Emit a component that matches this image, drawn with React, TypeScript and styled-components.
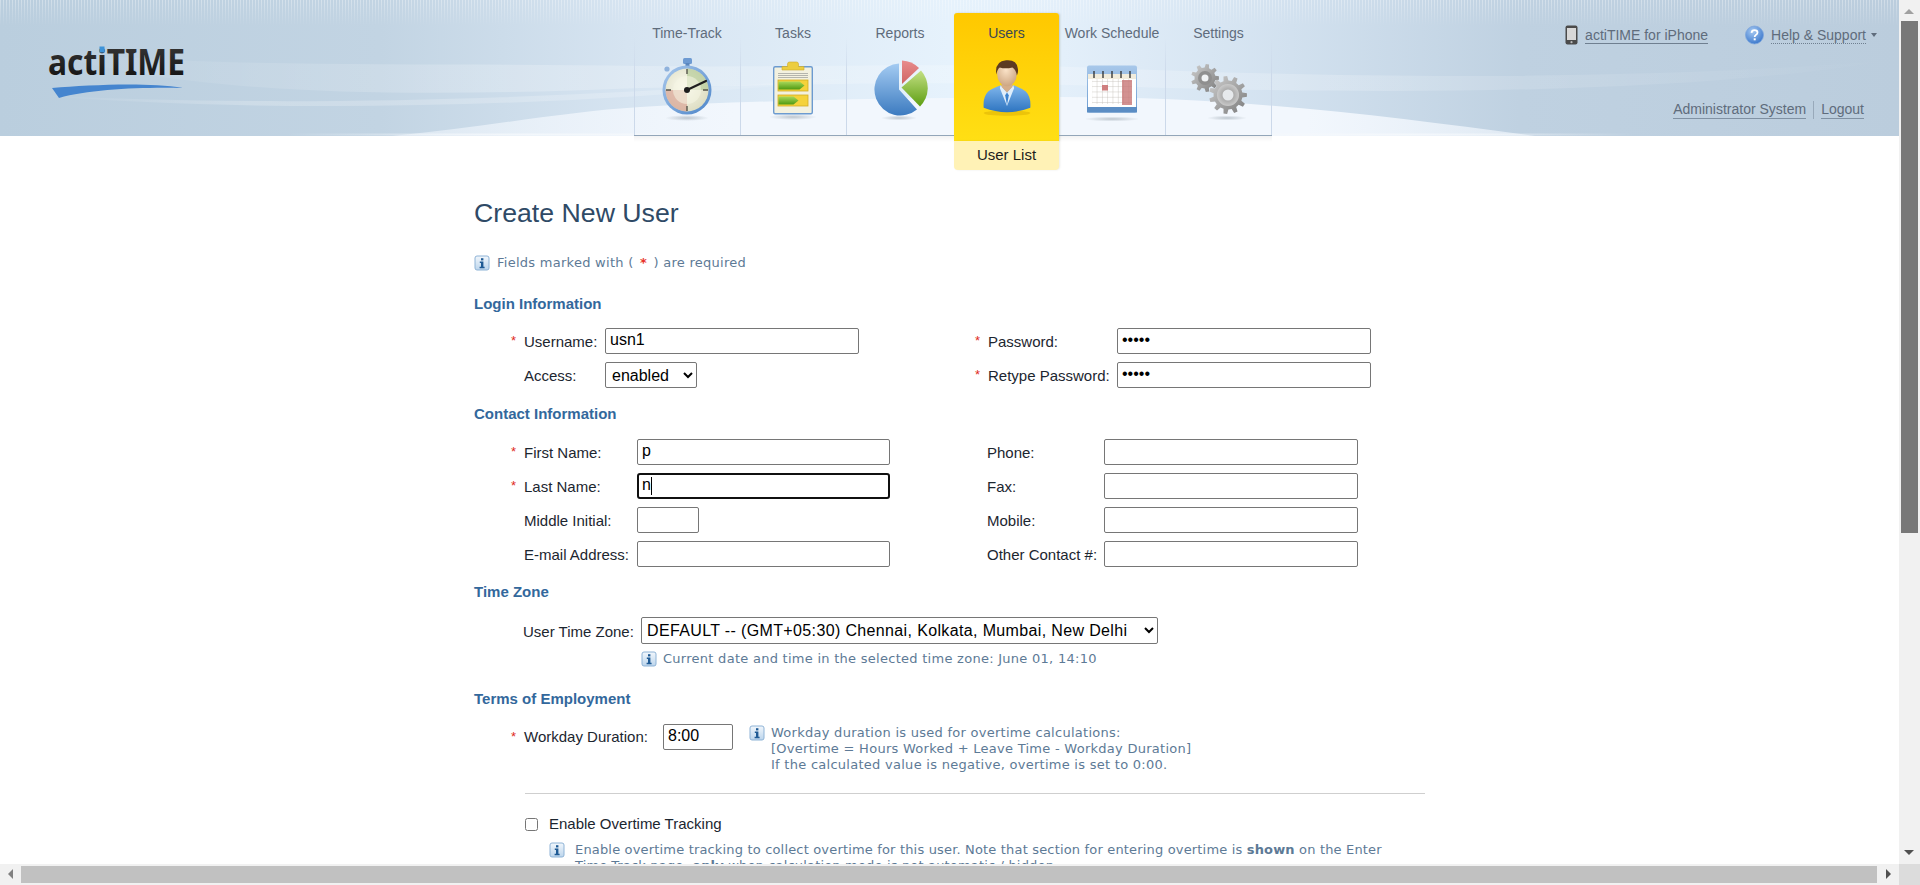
import React from "react";
import styled, { createGlobalStyle } from "styled-components";

const Global = createGlobalStyle`
  html, body { margin: 0; padding: 0; height: 100%; overflow: hidden; background: #fff; }
  body { font-family: "Liberation Sans", Arial, sans-serif; font-size: 15px; color: #1c2630; }
  * { box-sizing: border-box; }
`;

const Frame = styled.div`
  display: grid;
  grid-template-columns: 1fr 21px;
  grid-template-rows: 1fr 21px;
  width: 100vw;
  height: 100vh;
  overflow: hidden;
`;
const Page = styled.div`
  min-width: 0;
  min-height: 0;
  overflow: hidden;
  display: flex;
  flex-direction: column;
`;
const Header = styled.header`
  position: relative;
  flex: 0 0 136px;
  height: 136px;
  display: flex;
  background: linear-gradient(90deg, #bacede 0%, #c2d4e3 20%, #d6e4f1 33%, #e6f2fc 50%, #e3effa 56%, #d2e1ef 68%, #bfd1e1 80%, #bbcddd 100%);
`;
const HeaderArt = styled.svg`
  position: absolute;
  inset: 0;
  width: 100%;
  height: 100%;
  pointer-events: none;
`;
const Stripes = styled.div`
  position: absolute;
  left: 0;
  right: 0;
  top: 0;
  height: 26px;
  background: repeating-linear-gradient(90deg, rgba(255,255,255,.34) 0 1px, rgba(255,255,255,0) 1px 3px);
  -webkit-mask-image: linear-gradient(180deg, #000, transparent);
  mask-image: linear-gradient(180deg, #000, transparent);
`;
const LogoBox = styled.div`
  position: relative;
  flex: 0 0 634px;
  padding: 41px 0 0 46px;
`;
const Nav = styled.nav`
  position: relative;
  display: flex;
  align-items: flex-start;
  height: 136px;
  padding-top: 13px;
  &::after {
    content: "";
    position: absolute;
    left: 0;
    right: 0;
    top: 136px;
    height: 6px;
    background: linear-gradient(180deg, #f3f3f3, #fff);
  }
`;
const Tab = styled.div<{ $w: number; $active?: boolean; $last?: boolean }>`
  position: relative;
  z-index: 1;
  width: ${(p) => p.$w}px;
  height: ${(p) => (p.$active ? 128 : 123)}px;
  display: flex;
  flex-direction: column;
  align-items: center;
  padding-top: 12px;
  font-size: 14px;
  line-height: 16px;
  color: ${(p) => (p.$active ? "#3a4756" : "#5f6c7c")};
  border-bottom: ${(p) => (p.$active ? "0" : "1px solid #93a6b9")};
  border-radius: ${(p) => (p.$active ? "3px 3px 0 0" : "0")};
  background: ${(p) =>
    p.$active
      ? "linear-gradient(180deg, #ffc800, #ffdf14)"
      : `linear-gradient(180deg, rgba(204,217,234,0) 20%, #ccd9ea 50%) left top / 1px 100% no-repeat${
          p.$last ? ", linear-gradient(180deg, rgba(204,217,234,0) 20%, #ccd9ea 50%) right top / 1px 100% no-repeat" : ""
        }`};
  box-shadow: ${(p) => (p.$active ? "1px 0 2px rgba(90,90,60,.25)" : "none")};
`;
const TabIcon = styled.div`
  height: 72px;
  margin-top: 13px;
  display: flex;
  align-items: flex-start;
  justify-content: center;
`;
const SubMenu = styled.div`
  position: absolute;
  left: 0;
  right: 0;
  top: 128px;
  height: 29px;
  background: #fff2b6;
  border-radius: 0 0 4px 4px;
  color: #1d1d1d;
  font-size: 15px;
  text-align: center;
  line-height: 28px;
  box-shadow: 1px 0 2px rgba(90,90,60,.12);
`;
const RightBox = styled.div`
  position: relative;
  margin-left: auto;
  padding: 25px 22px 0 0;
  display: flex;
  flex-direction: column;
  align-items: flex-end;
  font-size: 14px;
  color: #5f6c7c;
`;
const TopLinks = styled.div`
  display: flex;
  align-items: center;
  height: 20px;
`;
const TopLink = styled.div<{ $gap?: number }>`
  display: flex;
  align-items: center;
  margin-left: ${(p) => p.$gap ?? 0}px;
`;
const Underlined = styled.span<{ $dotted?: boolean }>`
  line-height: 16px;
  margin-left: 7px;
  border-bottom: 1px ${(p) => (p.$dotted ? "dotted" : "solid")} #6f7f90;
`;
const Caret = styled.span`
  width: 0;
  height: 0;
  border: 3px solid transparent;
  border-top: 4px solid #5f6c7c;
  border-bottom: 0;
  margin-left: 5px;
`;
const UserLinks = styled.div`
  display: flex;
  align-items: flex-start;
  margin: 56px 13px 0 0;
`;
const UserLink = styled.span`
  line-height: 17px;
  border-bottom: 1px solid #8091a3;
`;
const UserDivider = styled.span`
  width: 1px;
  height: 18px;
  background: #98a9ba;
  margin: 0 7px;
`;
const Content = styled.main`
  padding: 61px 0 0 474px;
  flex: 1;
  min-height: 0;
`;
const Title = styled.h1`
  margin: 0;
  font-size: 26.7px;
  line-height: 32px;
  font-weight: 400;
  color: #2f4a66;
`;
const Note = styled.div<{ $top?: number; $left?: number; $tight?: boolean }>`
  display: flex;
  align-items: flex-start;
  margin-top: ${(p) => p.$top ?? 0}px;
  margin-left: ${(p) => p.$left ?? 0}px;
  font-family: "DejaVu Sans", Verdana, sans-serif;
  font-size: 13px;
  letter-spacing: ${(p) => (p.$tight ? ".17px" : ".27px")};
  line-height: 16px;
  color: #5d7a96;
  b { font-weight: 700; }
`;
const NoteText = styled.div<{ $gap?: number; $w?: number }>`
  margin-left: ${(p) => p.$gap ?? 7}px;
  ${(p) => (p.$w ? `width: ${p.$w}px;` : "")}
`;
const Stars = styled.span`
  color: #e8332a;
  font-weight: 700;
  margin: 0 2px;
`;
const Section = styled.h2<{ $top: number }>`
  margin: ${(p) => p.$top}px 0 0 0;
  font-size: 15px;
  line-height: 16px;
  font-weight: 700;
  color: #33689c;
`;
const Rows = styled.div<{ $top: number }>`
  margin-top: ${(p) => p.$top}px;
  display: flex;
  flex-direction: column;
  gap: 8px;
`;
const Row = styled.div`
  display: flex;
  height: 26px;
  padding-left: 37px;
`;
const Field = styled.div<{ $w?: number }>`
  display: flex;
  align-items: center;
  flex: 0 0 ${(p) => p.$w ?? 464}px;
  height: 26px;
`;
const Star = styled.span`
  flex: 0 0 13px;
  color: #e02a20;
  font-size: 13px;
  line-height: 14px;
  align-self: center;
`;
const Label = styled.label<{ $w: number; $flat?: boolean; $lift?: number }>`
  flex: 0 0 ${(p) => p.$w}px;
  padding-top: ${(p) => (p.$flat ? 0 : 1)}px;
  margin-bottom: ${(p) => p.$lift ?? 0}px;
  color: #1c2630;
`;
const TextInput = styled.input<{ $w?: number; $focused?: boolean }>`
  display: block;
  width: ${(p) => p.$w ?? 254}px;
  height: 26px;
  padding: ${(p) => (p.$focused ? "0 3px 2px" : "1px 4px 3px")};
  border: ${(p) => (p.$focused ? "2px solid #101010" : "1px solid #767676")};
  border-radius: ${(p) => (p.$focused ? 3 : 2)}px;
  background: #fff;
  color: #000;
  font-family: "Liberation Sans", Arial, sans-serif;
  font-size: 16px;
  outline: none;
`;
const InputSlot = styled.div`
  position: relative;
`;
const TextCaret = styled.span`
  position: absolute;
  left: 14px;
  top: 4px;
  width: 1px;
  height: 18px;
  background: #000;
`;
const Select = styled.select<{ $w: number; $tall?: boolean; $wide?: boolean }>`
  width: ${(p) => p.$w}px;
  height: ${(p) => (p.$tall ? 27 : 26)}px;
  border: 1px solid #767676;
  border-radius: 2px;
  background: #fff;
  color: #000;
  font-family: "Liberation Sans", Arial, sans-serif;
  font-size: 16px;
  letter-spacing: ${(p) => (p.$wide ? ".36px" : "0")};
  padding: 0 0 0 ${(p) => (p.$wide ? 1 : 2)}px;
`;
const ZoneRow = styled.div`
  display: flex;
  align-items: center;
  margin-top: 17px;
  padding-left: 49px;
`;
const DurationRow = styled.div`
  display: flex;
  align-items: flex-start;
  margin-top: 17px;
  padding-left: 37px;
`;
const DurationLabel = styled.div`
  display: flex;
  align-items: center;
  height: 26px;
`;
const DurationNote = styled(Note)`
  margin-left: 16px;
  padding-top: 1px;
`;
const Rule = styled.hr`
  width: 900px;
  height: 1px;
  margin: 20px 0 0 51px;
  border: 0;
  background: #cfcfcf;
`;
const CheckRow = styled.label`
  display: flex;
  align-items: center;
  margin: 22px 0 0 51px;
  line-height: 16px;
  input { margin: 0 11px 0 0; width: 13px; height: 13px; }
`;
const VBar = styled.div`
  position: relative;
  background: #f1f1f1;
  display: flex;
  flex-direction: column;
  align-items: center;
`;
const VThumb = styled.div`
  width: 17px;
  height: 512px;
  margin-top: 21px;
  background: #787878;
`;
const HBar = styled.div`
  position: relative;
  display: flex;
  align-items: center;
  background: #f1f1f1;
  height: 21px;
`;
const HThumb = styled.div`
  flex: 1;
  height: 17px;
  margin: 0 22px 0 21px;
  background: #c1c1c1;
`;
const Corner = styled.div`
  background: #dcdcdc;
`;
const Arrow = styled.span<{ $dir: "up" | "down" | "left" | "right" }>`
  position: absolute;
  width: 0;
  height: 0;
  border: 5px solid transparent;
  ${(p) =>
    p.$dir === "up"
      ? "top: 9px; left: 5px; border-top: 0; border-bottom: 5px solid #a0a0a0;"
      : p.$dir === "down"
      ? "bottom: 9px; left: 5px; border-bottom: 0; border-top: 5px solid #505050;"
      : p.$dir === "left"
      ? "left: 8px; top: 5px; border-left: 0; border-right: 5px solid #808080;"
      : "right: 8px; top: 5px; border-right: 0; border-left: 5px solid #505050;"}
`;

const Info = () => (
  <svg width="16" height="16" viewBox="0 0 16 16" style={{ flex: "0 0 16px" }}>
    <defs>
      <linearGradient id="infoFill" x1="0" y1="0" x2="0" y2="1">
        <stop offset="0" stopColor="#f2f7fc" />
        <stop offset="1" stopColor="#bcd5ec" />
      </linearGradient>
    </defs>
    <rect x="1" y="1" width="14" height="14" rx="2" fill="url(#infoFill)" stroke="#8eb3d6" />
    <rect x="7" y="3.2" width="2.4" height="2.2" fill="#1f5a94" />
    <path d="M5.8 6.6h3.6v5.2h1.2v1.4H5.6v-1.4h1.4V8H5.8z" fill="#1f5a94" />
  </svg>
);

const Stopwatch = () => (
  <svg width="54" height="66" viewBox="0 0 54 66" style={{ marginTop: 4 }}>
    <defs>
      <radialGradient id="swFace" cx=".42" cy=".42" r=".65">
        <stop offset="0" stopColor="#fbfaf0" />
        <stop offset="1" stopColor="#dcdcc0" />
      </radialGradient>
      <linearGradient id="swRim" x1="0" y1="0" x2="1" y2="1">
        <stop offset="0" stopColor="#a9c8ec" />
        <stop offset="1" stopColor="#4c85c9" />
      </linearGradient>
      <radialGradient id="shade" cx=".5" cy=".5" r=".5">
        <stop offset="0" stopColor="#9aa6b0" stopOpacity=".6" />
        <stop offset="1" stopColor="#9aa6b0" stopOpacity="0" />
      </radialGradient>
    </defs>
    <ellipse cx="27" cy="60" rx="22" ry="3" fill="url(#shade)" />
    <rect x="23" y="0" width="9" height="6" rx="1.5" fill="#6d9ad2" />
    <rect x="25.5" y="5" width="4" height="3" fill="#5a86bd" />
    <circle cx="7" cy="11" r="2.6" fill="#8fb2dc" />
    <circle cx="27" cy="32" r="24.5" fill="url(#swRim)" />
    <circle cx="27" cy="32" r="21.5" fill="url(#swFace)" />
    <path d="M27 32V10.5A21.5 21.5 0 0 1 48.5 32Z" fill="#a9c48a" opacity=".55" />
    <path d="M27 32H5.5A21.5 21.5 0 0 0 27 53.5Z" fill="#d79a8c" opacity=".6" />
    <circle cx="27" cy="32" r="14" fill="#f6f5e4" opacity=".55" />
    <g stroke="#55544a" strokeWidth="1.4">
      <path d="M27 11v5M27 48v5M6 32h5M43 32h5" />
    </g>
    <path d="M27 32L46 23" stroke="#1e1e1e" strokeWidth="2.2" strokeLinecap="round" />
    <circle cx="27" cy="32" r="3" fill="#1e1e1e" />
  </svg>
);

const Clipboard = () => (
  <svg width="48" height="62" viewBox="0 0 48 62" style={{ marginTop: 7 }}>
    <defs>
      <linearGradient id="clipPencil" x1="0" y1="0" x2="0" y2="1">
        <stop offset="0" stopColor="#a9d85a" />
        <stop offset="1" stopColor="#4f9a12" />
      </linearGradient>
    </defs>
    <ellipse cx="24" cy="56" rx="24" ry="3" fill="url(#shade)" />
    <rect x="4.7" y="5.7" width="38.6" height="47" rx="1.5" fill="#f3f1df" stroke="#6c9bd0" strokeWidth="1.4" />
    <path d="M13 5.5h5.5V3q0-2 2-2h7q2 0 2 2v2.5H35V9H13z" fill="#eccd3f" stroke="#cfa92b" strokeWidth=".6" />
    <path d="M9 12.5h30M9 14.5h30M9 16.5h30" stroke="#b5b5ad" strokeWidth="1" />
    <rect x="9" y="19" width="30" height="11" fill="#f5d23a" stroke="#d2ad24" strokeWidth=".8" />
    <path d="M9.5 20.5h21l5 4-5 4h-21z" fill="url(#clipPencil)" />
    <rect x="9" y="34" width="30" height="11" fill="#f5d23a" stroke="#d2ad24" strokeWidth=".8" />
    <path d="M9.5 35.5h15l5 4-5 4h-15z" fill="url(#clipPencil)" />
  </svg>
);

const Pie = () => (
  <svg width="56" height="62" viewBox="0 0 56 62" style={{ marginTop: 6, marginLeft: 2 }}>
    <defs>
      <linearGradient id="pieBlue" x1="0" y1="0" x2="0" y2="1">
        <stop offset="0" stopColor="#a4cbf2" />
        <stop offset="1" stopColor="#3c7bc0" />
      </linearGradient>
      <linearGradient id="pieGreen" x1="0" y1="0" x2="0" y2="1">
        <stop offset="0" stopColor="#c4e084" />
        <stop offset="1" stopColor="#5d9e12" />
      </linearGradient>
      <linearGradient id="pieRed" x1="0" y1="0" x2="0" y2="1">
        <stop offset="0" stopColor="#e88c8c" />
        <stop offset="1" stopColor="#cf6464" />
      </linearGradient>
    </defs>
    <ellipse cx="26" cy="58" rx="18" ry="2.5" fill="url(#shade)" />
    <path d="M26 3.5v26l18 20A26 26 0 1 1 26 3.5Z" fill="url(#pieBlue)" />
    <path d="M29 0.5A26 26 0 0 1 46 8L29 24Z" fill="url(#pieRed)" />
    <path d="M48 10.5A26 26 0 0 1 47 46.5L28.5 27.5Z" fill="url(#pieGreen)" />
  </svg>
);

const UserIcon = () => (
  <svg width="52" height="58" viewBox="0 0 58 64" style={{ marginTop: 5 }}>
    <defs>
      <radialGradient id="face" cx=".45" cy=".35" r=".7">
        <stop offset="0" stopColor="#fbe3c8" />
        <stop offset="1" stopColor="#caa27e" />
      </radialGradient>
      <linearGradient id="suit" x1="0" y1="0" x2="0" y2="1">
        <stop offset="0" stopColor="#80b6ec" />
        <stop offset="1" stopColor="#2d74c0" />
      </linearGradient>
    </defs>
    <ellipse cx="29" cy="60" rx="26" ry="3" fill="#c89a00" opacity=".35" />
    <path d="M3 54q-1-12 5-18 5-4 14-7l7 6 7-6q9 3 14 7 6 6 5 18-13 5-26 5T3 54Z" fill="url(#suit)" />
    <path d="M22 29l7 8 7-8 1 3-8 20-8-20z" fill="#dfeefb" />
    <path d="M29 37l-2 3 2 11 2-11z" fill="#3c83cf" />
    <path d="M23 22h12v9l-6 6-6-6z" fill="#d5ae8a" />
    <ellipse cx="29" cy="16" rx="11" ry="14" fill="url(#face)" />
    <path d="M17 17q-2-15 11-16 12-1 13 9 1 4-1 8-1-7-5-9-8 2-14 0-3 2-4 8Z" fill="#5c3a22" />
  </svg>
);

const Calendar = () => (
  <svg width="52" height="60" viewBox="0 0 52 60" style={{ marginTop: 11 }}>
    <defs>
      <linearGradient id="calTop" x1="0" y1="0" x2="0" y2="1">
        <stop offset="0" stopColor="#a8c8ea" />
        <stop offset="1" stopColor="#6b9bd0" />
      </linearGradient>
      <pattern id="calGrid" width="5.3" height="5.3" patternUnits="userSpaceOnUse">
        <path d="M0 0h5.3M0 0v5.3" stroke="#b9b4ac" strokeWidth=".7" fill="none" />
      </pattern>
    </defs>
    <ellipse cx="26" cy="54" rx="28" ry="2.5" fill="url(#shade)" />
    <rect x="1" y="0.5" width="50" height="47" rx="2" fill="url(#calTop)" />
    <rect x="2" y="9" width="48" height="33" fill="#fff" />
    <rect x="2" y="9" width="48" height="5" fill="#f1ecdc" />
    <rect x="6" y="14" width="40" height="25" fill="url(#calGrid)" />
    <rect x="16" y="20" width="6" height="5.5" fill="#cf7f7f" />
    <rect x="36" y="15" width="10" height="25" fill="#c87676" opacity=".8" />
    <g stroke="#2d2d2d" strokeWidth="1.3">
      <path d="M8 6v7M17 6v7M26 6v7M35 6v7M44 6v7" />
    </g>
    <rect x="1" y="42" width="50" height="5.5" fill="#5b8dc4" />
  </svg>
);

const gearPath = (cx: number, cy: number, ro: number, ri: number, teeth: number) => {
  const pts: string[] = [];
  const step = (Math.PI * 2) / teeth;
  for (let i = 0; i < teeth; i++) {
    const a = i * step;
    const seq: Array<[number, number]> = [
      [a - step * 0.3, ri],
      [a - step * 0.17, ro],
      [a + step * 0.17, ro],
      [a + step * 0.3, ri],
    ];
    seq.forEach(([t, r]) => pts.push(`${(cx + r * Math.cos(t)).toFixed(2)} ${(cy + r * Math.sin(t)).toFixed(2)}`));
  }
  return `M${pts.join("L")}Z`;
};

const Gears = () => (
  <svg width="58" height="60" viewBox="0 0 58 60" style={{ marginTop: 10 }}>
    <defs>
      <linearGradient id="gearFill" x1="0" y1="0" x2="1" y2="1">
        <stop offset="0" stopColor="#cfcfcf" />
        <stop offset="1" stopColor="#7b7b7b" />
      </linearGradient>
      <radialGradient id="gearHub" cx=".5" cy=".5" r=".5">
        <stop offset="0" stopColor="#8e8e8e" />
        <stop offset="1" stopColor="#c9c9c9" />
      </radialGradient>
    </defs>
    <ellipse cx="37" cy="54" rx="20" ry="2.5" fill="url(#shade)" />
    <path d={gearPath(15, 14, 14, 10.5, 9)} fill="url(#gearFill)" />
    <circle cx="15" cy="14" r="7" fill="#8f8f8f" />
    <circle cx="15" cy="14" r="3.5" fill="#f0f2f4" />
    <path d={gearPath(38, 31, 19, 14.5, 11)} fill="url(#gearFill)" />
    <circle cx="38" cy="31" r="11" fill="url(#gearHub)" />
    <circle cx="38" cy="31" r="5.5" fill="#e6e9ec" />
  </svg>
);

const Phone = () => (
  <svg width="13" height="20" viewBox="0 0 13 20">
    <rect x="0.5" y="0.5" width="12" height="19" rx="2" fill="#4b4b4b" />
    <rect x="2" y="3" width="9" height="12" fill="#d8d8d8" />
    <circle cx="6.5" cy="17.2" r="1.1" fill="#bbb" />
  </svg>
);

const Help = () => (
  <svg width="19" height="20" viewBox="0 0 19 20">
    <defs>
      <radialGradient id="helpFill" cx=".4" cy=".3" r=".8">
        <stop offset="0" stopColor="#a6c9f2" />
        <stop offset="1" stopColor="#2f6fc8" />
      </radialGradient>
    </defs>
    <circle cx="9.5" cy="10" r="9" fill="url(#helpFill)" stroke="#7ea6dc" strokeWidth=".8" />
    <path d="M6.5 7.800q.3-2.600 3-2.600 3 0 3 2.400 0 1.500-1.700 2.400-1.100.6-1.100 2" fill="none" stroke="#fff" strokeWidth="1.8" />
    <rect x="8.7" y="13.3" width="2" height="2" fill="#fff" />
  </svg>
);

const tabs = [
  { name: "Time-Track", w: 106, icon: <Stopwatch /> },
  { name: "Tasks", w: 106, icon: <Clipboard /> },
  { name: "Reports", w: 108, icon: <Pie /> },
  { name: "Users", w: 105, icon: <UserIcon />, active: true },
  { name: "Work Schedule", w: 106, icon: <Calendar /> },
  { name: "Settings", w: 107, icon: <Gears />, last: true },
];

const Art = () => (
  <HeaderArt viewBox="0 0 1899 136" preserveAspectRatio="none">
    <defs>
      <linearGradient id="waveFade" x1="0" y1="0" x2="1" y2="0">
        <stop offset="0" stopColor="#fff" stopOpacity="0" />
        <stop offset=".25" stopColor="#fff" stopOpacity=".22" />
        <stop offset=".7" stopColor="#fff" stopOpacity=".2" />
        <stop offset="1" stopColor="#fff" stopOpacity="0" />
      </linearGradient>
      <linearGradient id="bottomLine" x1="0" y1="0" x2="1" y2="0">
        <stop offset="0" stopColor="#fff" stopOpacity="0" />
        <stop offset=".2" stopColor="#f4f8fc" stopOpacity=".9" />
        <stop offset=".8" stopColor="#f4f8fc" stopOpacity=".9" />
        <stop offset="1" stopColor="#fff" stopOpacity="0" />
      </linearGradient>
      <linearGradient id="lowWave" x1="0" y1="0" x2="1" y2="0">
        <stop offset="0" stopColor="#f2f7fd" stopOpacity=".5" />
        <stop offset=".3" stopColor="#f2f7fd" />
        <stop offset=".8" stopColor="#f2f7fd" />
        <stop offset="1" stopColor="#f2f7fd" stopOpacity=".6" />
      </linearGradient>
    </defs>
    <path d="M30 48C190 70 420 62 640 66 800 68 950 62 1100 68 1300 76 1600 84 1895 60 1650 100 1300 92 1100 86 900 80 800 85 640 88 400 98 180 96 30 48Z" fill="url(#waveFade)" />
    <path d="M30 95C300 108 560 100 900 74 600 106 300 116 30 95Z" fill="url(#waveFade)" />
    <path d="M392 136C480 128 560 112 640 107 760 100 900 98 1060 97 1250 97 1400 118 1535 136Z" fill="url(#lowWave)" />
    <rect x="285" y="133.5" width="1350" height="2" fill="url(#bottomLine)" />
  </HeaderArt>
);

const Logo = () => (
  <svg width="144" height="62" viewBox="0 0 144 62" style={{ display: "block" }}>
    <defs>
      <linearGradient id="logoText" x1="0" y1="0" x2="0" y2="1">
        <stop offset="0" stopColor="#3d3d3d" />
        <stop offset="1" stopColor="#0c0c0c" />
      </linearGradient>
    </defs>
    <text x="2" y="34" fontFamily="Noto Sans, sans-serif" fontWeight="700" fontSize="36" fill="url(#logoText)" textLength="137" lengthAdjust="spacingAndGlyphs">actiTIME</text>
    <rect x="53.5" y="5.5" width="5" height="6" fill="#3e93d8" />
    <path d="M6 47C44 44 100 41 137 47 96 46 44 48 13 57Z" fill="#4585cf" />
  </svg>
);

export default function App() {
  return (
    <>
      <Global />
      <Frame>
        <Page>
          <Header>
            <Art />
            <Stripes />
            <LogoBox>
              <Logo />
            </LogoBox>
            <Nav>
              {tabs.map((t) => (
                <Tab key={t.name} $w={t.w} $active={t.active} $last={t.last}>
                  {t.name}
                  <TabIcon>{t.icon}</TabIcon>
                  {t.active && <SubMenu>User List</SubMenu>}
                </Tab>
              ))}
            </Nav>
            <RightBox>
              <TopLinks>
                <TopLink>
                  <Phone />
                  <Underlined>actiTIME for iPhone</Underlined>
                </TopLink>
                <TopLink $gap={37}>
                  <Help />
                  <Underlined $dotted>Help &amp; Support</Underlined>
                  <Caret />
                </TopLink>
              </TopLinks>
              <UserLinks>
                <UserLink>Administrator System</UserLink>
                <UserDivider />
                <UserLink>Logout</UserLink>
              </UserLinks>
            </RightBox>
          </Header>
          <Content>
            <Title>Create New User</Title>
            <Note $top={26}>
              <Info />
              <NoteText>
                Fields marked with ( <Stars>*</Stars> ) are required
              </NoteText>
            </Note>

            <Section $top={25}>Login Information</Section>
            <Rows $top={16}>
              <Row>
                <Field>
                  <Star>*</Star>
                  <Label $w={81}>Username:</Label>
                  <TextInput defaultValue="usn1" />
                </Field>
                <Field>
                  <Star>*</Star>
                  <Label $w={129}>Password:</Label>
                  <TextInput type="password" defaultValue="12345" />
                </Field>
              </Row>
              <Row>
                <Field>
                  <Star />
                  <Label $w={81}>Access:</Label>
                  <Select $w={92} defaultValue="enabled">
                    <option>enabled</option>
                    <option>disabled</option>
                  </Select>
                </Field>
                <Field>
                  <Star>*</Star>
                  <Label $w={129}>Retype Password:</Label>
                  <TextInput type="password" defaultValue="12345" />
                </Field>
              </Row>
            </Rows>

            <Section $top={18}>Contact Information</Section>
            <Rows $top={17}>
              <Row>
                <Field $w={463}>
                  <Star>*</Star>
                  <Label $w={113} $flat>First Name:</Label>
                  <TextInput $w={253} defaultValue="p" />
                </Field>
                <Field>
                  <Star />
                  <Label $w={117} $flat>Phone:</Label>
                  <TextInput />
                </Field>
              </Row>
              <Row>
                <Field $w={463}>
                  <Star>*</Star>
                  <Label $w={113} $flat>Last Name:</Label>
                  <InputSlot>
                    <TextInput $w={253} defaultValue="n" $focused />
                    <TextCaret />
                  </InputSlot>
                </Field>
                <Field>
                  <Star />
                  <Label $w={117} $flat>Fax:</Label>
                  <TextInput />
                </Field>
              </Row>
              <Row>
                <Field $w={463}>
                  <Star />
                  <Label $w={113} $flat>Middle Initial:</Label>
                  <TextInput $w={62} />
                </Field>
                <Field>
                  <Star />
                  <Label $w={117} $flat>Mobile:</Label>
                  <TextInput />
                </Field>
              </Row>
              <Row>
                <Field $w={463}>
                  <Star />
                  <Label $w={113} $flat>E-mail Address:</Label>
                  <TextInput $w={253} />
                </Field>
                <Field>
                  <Star />
                  <Label $w={117} $flat>Other Contact #:</Label>
                  <TextInput />
                </Field>
              </Row>
            </Rows>

            <Section $top={17}>Time Zone</Section>
            <ZoneRow>
              <Label $w={118}>User Time Zone:</Label>
              <Select $w={517} $tall $wide defaultValue="d">
                <option value="d">DEFAULT -- (GMT+05:30) Chennai, Kolkata, Mumbai, New Delhi</option>
              </Select>
            </ZoneRow>
            <Note $top={7} $left={167}>
              <Info />
              <NoteText $gap={6}>Current date and time in the selected time zone: June 01, 14:10</NoteText>
            </Note>

            <Section $top={24}>Terms of Employment</Section>
            <DurationRow>
              <DurationLabel>
                <Star>*</Star>
                <Label $w={139} $flat $lift={2}>Workday Duration:</Label>
                <TextInput $w={70} defaultValue="8:00" />
              </DurationLabel>
              <DurationNote>
                <Info />
                <NoteText $gap={6}>
                  Workday duration is used for overtime calculations:
                  <br />
                  [Overtime = Hours Worked + Leave Time - Workday Duration]
                  <br />
                  If the calculated value is negative, overtime is set to 0:00.
                </NoteText>
              </DurationNote>
            </DurationRow>
            <Rule />
            <CheckRow>
              <input type="checkbox" />
              Enable Overtime Tracking
            </CheckRow>
            <Note $top={10} $left={75} $tight>
              <Info />
              <NoteText $gap={10} $w={830}>
                Enable overtime tracking to collect overtime for this user. Note that section for entering overtime is <b>shown</b> on the Enter Time-Track page, <b>only</b> when calculation mode is not automatic / hidden
              </NoteText>
            </Note>
          </Content>
        </Page>
        <VBar>
          <Arrow $dir="up" />
          <VThumb />
          <Arrow $dir="down" />
        </VBar>
        <HBar>
          <Arrow $dir="left" />
          <HThumb />
          <Arrow $dir="right" />
        </HBar>
        <Corner />
      </Frame>
    </>
  );
}
